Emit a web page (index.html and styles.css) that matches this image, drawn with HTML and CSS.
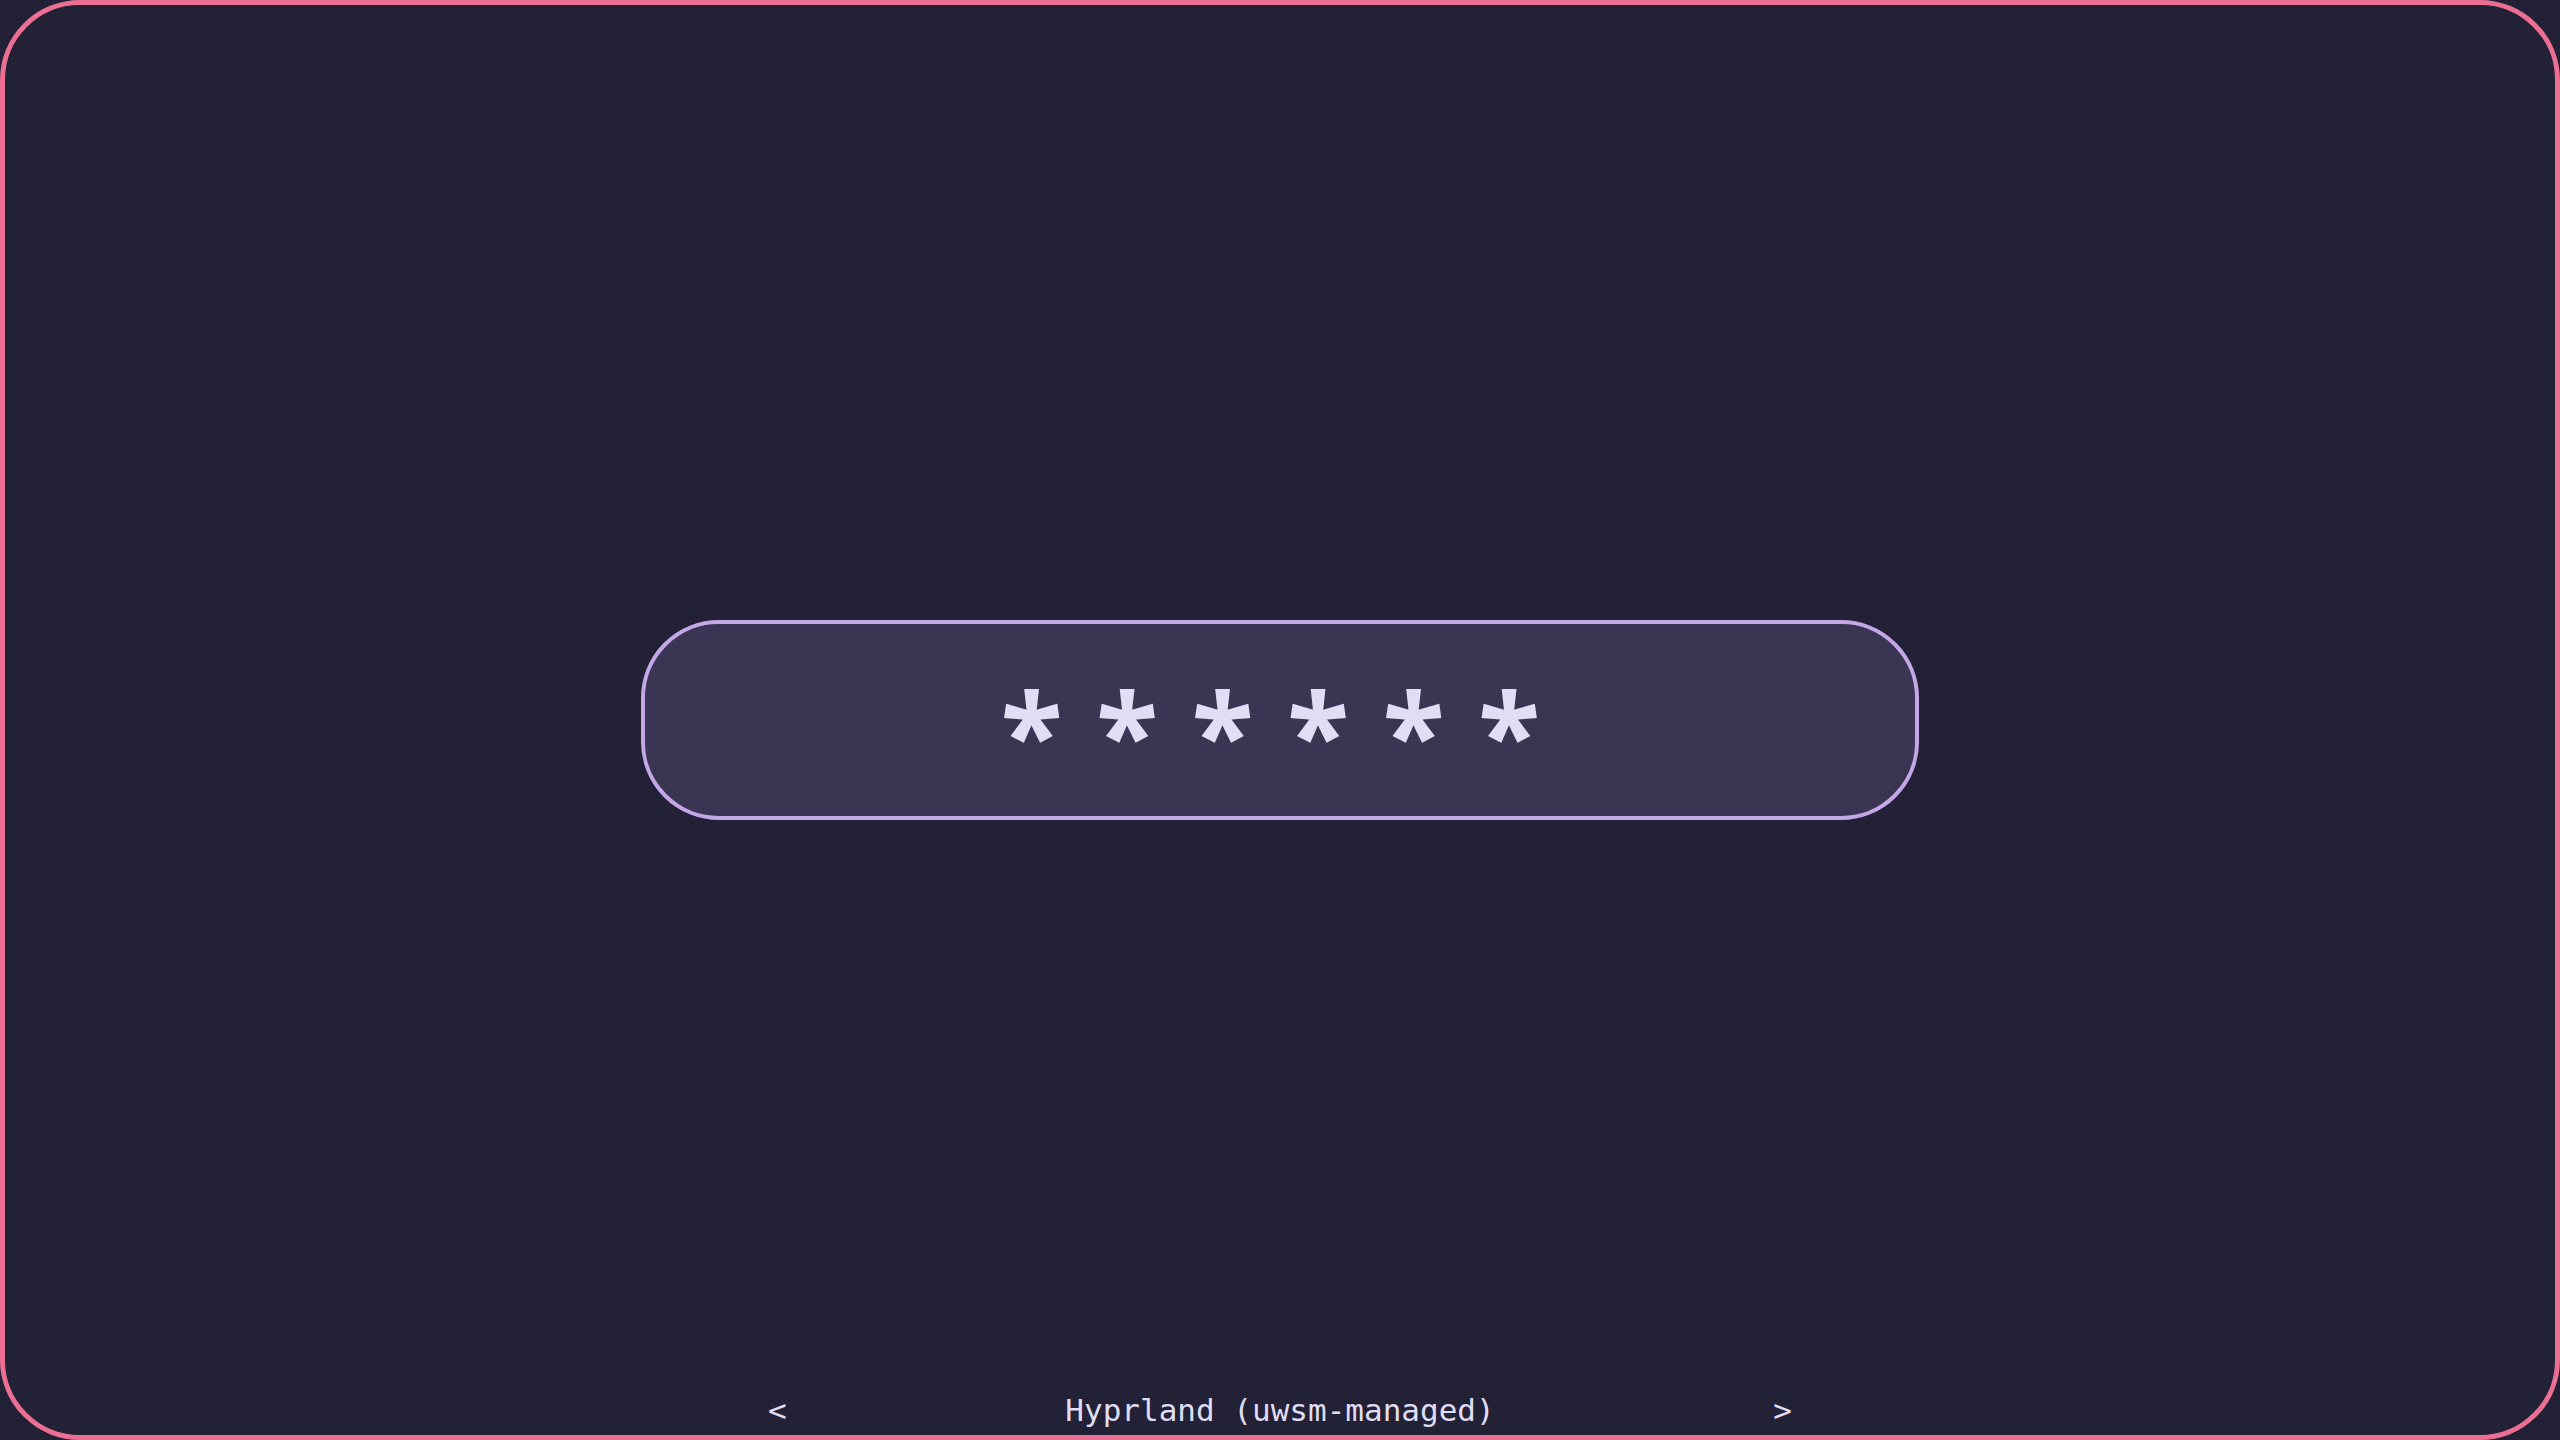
FILE: index.html
```html
<!DOCTYPE html>
<html lang="en">
<head>
    <meta charset="UTF-8">
    <meta name="viewport" content="width=device-width, initial-scale=1.0">
    <title>Login</title>
    <link rel="stylesheet" href="styles.css">
</head>
<body>
    <div class="screen">
        <div class="spacer"></div>
        <div class="password-box">
            <div class="password">
                <span>*</span><span>*</span><span>*</span><span>*</span><span>*</span><span>*</span>
            </div>
        </div>
        <div class="bottom">
            <div class="session">
                <span class="arrow left">&lt;</span>
                <span class="session-name">Hyprland (uwsm-managed)</span>
                <span class="arrow right">&gt;</span>
            </div>
        </div>
    </div>
</body>
</html>
```

FILE: styles.css
```css
html, body {
    margin: 0;
    padding: 0;
    height: 100%;
    background: #232136;
}
body {
    font-family: "DejaVu Sans Mono", "Liberation Mono", monospace;
    color: #e0def4;
}
.screen {
    box-sizing: border-box;
    height: 100vh;
    border: 5px solid #eb6f92;
    border-radius: 80px;
    display: grid;
    grid-template-rows: 1fr auto 1fr;
    justify-items: center;
}
.password-box {
    box-sizing: border-box;
    width: 1278px;
    height: 200px;
    background: #393552;
    border: 4px solid #c4a7e7;
    border-radius: 78px;
    display: flex;
    align-items: center;
    justify-content: center;
}
/* masked input: one cell per character */
.password {
    display: flex;
    font-family: "Noto Sans", sans-serif;
    font-weight: bold;
    font-size: 114px;
    line-height: 1;
    padding-right: 19px;
    padding-top: 24px;
}
.password span {
    width: 95.5px;
    text-align: center;
}
.bottom {
    align-self: end;
    width: 100%;
    display: flex;
    justify-content: center;
}
.session {
    width: 1024px;
    display: grid;
    grid-template-columns: 1fr auto 1fr;
    font-size: 31px;
    line-height: 36px;
    padding-bottom: 7px;
}
.arrow.left {
    justify-self: start;
}
.arrow.right {
    justify-self: end;
}
```
